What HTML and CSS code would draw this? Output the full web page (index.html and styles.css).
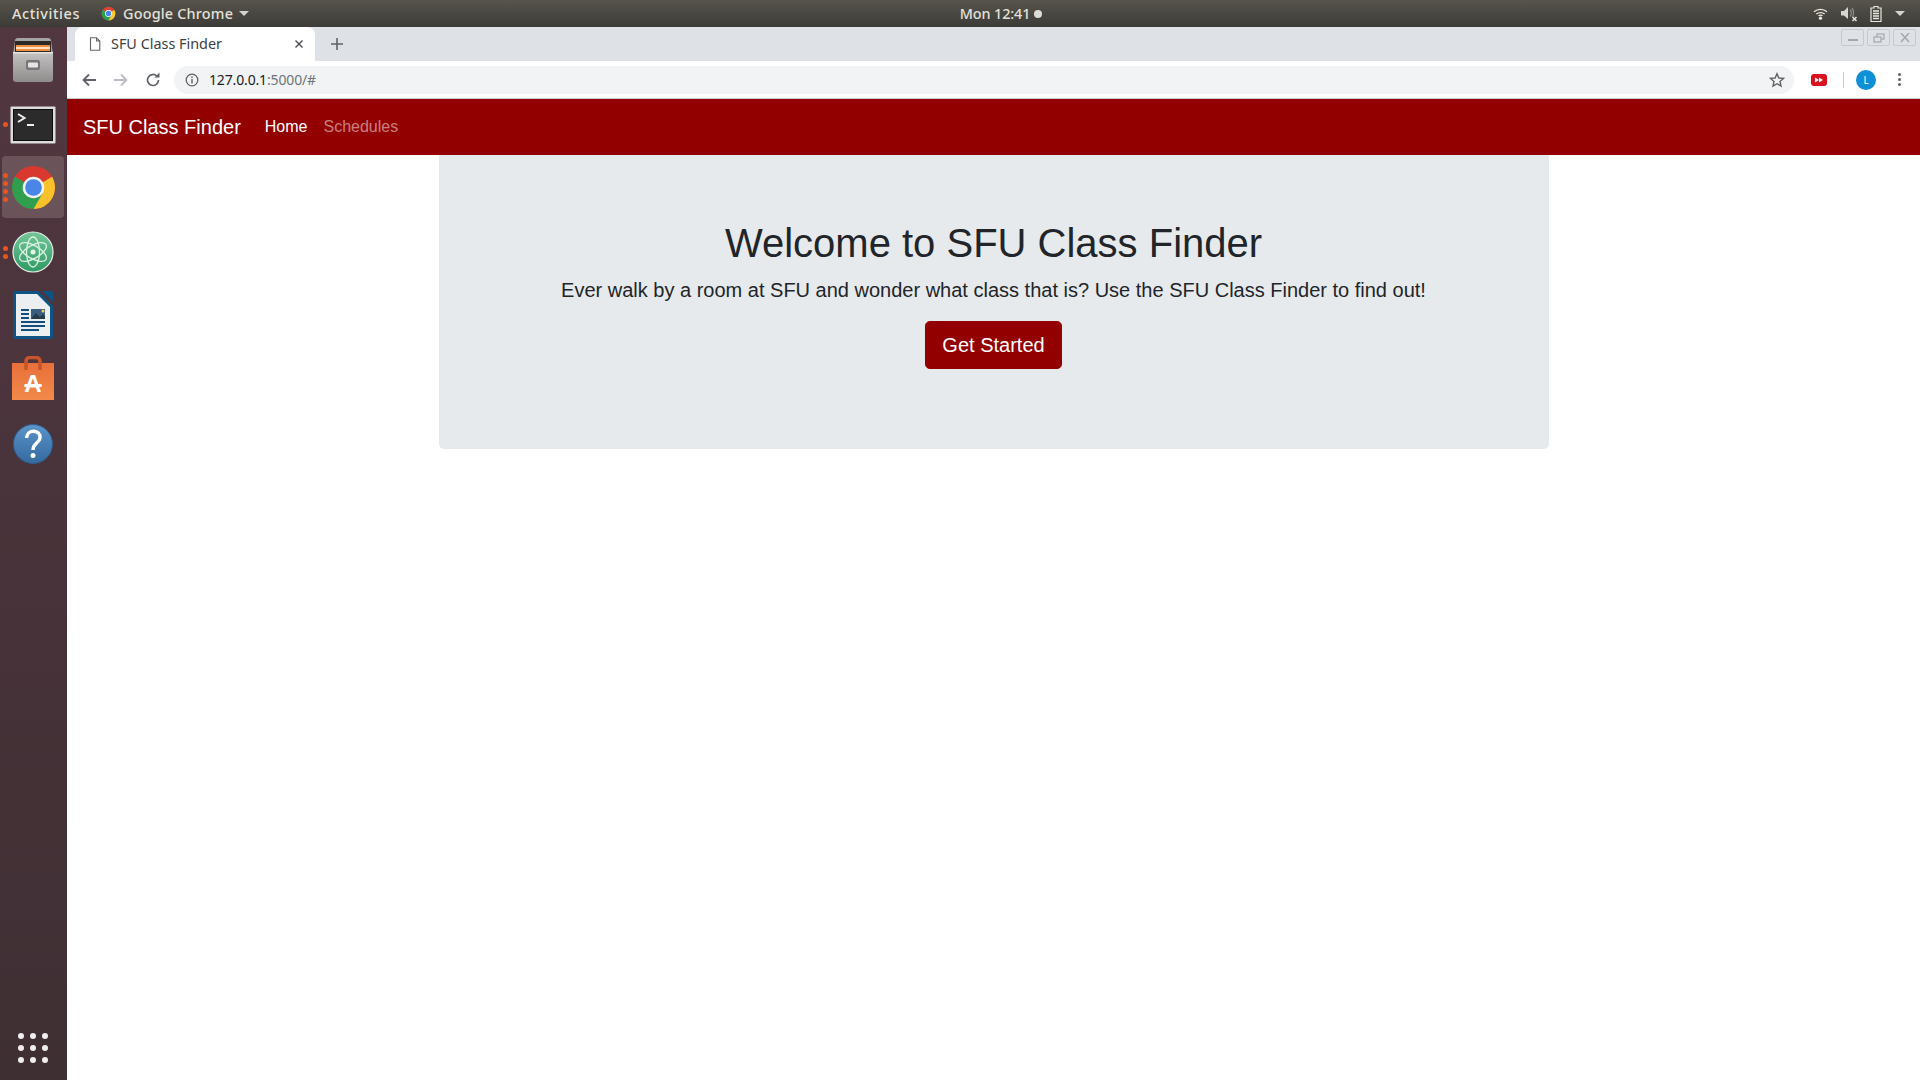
FILE: index.html
```html
<!DOCTYPE html>
<html lang="en">
<head>
<meta charset="utf-8">
<title>SFU Class Finder</title>
<link rel="stylesheet" href="styles.css">
</head>
<body>
<header class="topbar">
  <div class="top-left">
    <span class="top-text top-activities">Activities</span>
    <span class="app-menu">
      <svg class="app-chrome" viewBox="0 0 48 48"><circle cx="24" cy="24" r="22" fill="#db4437"/><path d="M24 24 43 13A22 22 0 0 1 24 46Z" fill="#fcc934"/><path d="M24 24 5 13A22 22 0 0 0 24 46L33.500 29.500Z" fill="#2f9e4f"/><circle cx="24" cy="24" r="11" fill="#fff"/><circle cx="24" cy="24" r="8.500" fill="#4285f4"/></svg>
      <span class="top-text">Google Chrome</span>
      <span class="caret"></span>
    </span>
  </div>
  <div class="top-clock"><span class="top-text clock-text">Mon 12:41</span><span class="clock-dot"></span></div>
  <div class="top-right">
    <svg class="tray-wifi" viewBox="0 0 16 14"><path d="M1 5.200C5 1.600 11 1.600 15 5.200" fill="none" stroke="#e8e6e0" stroke-width="1.500"/><path d="M3.500 7.600C6 5.600 10 5.600 12.500 7.600" fill="none" stroke="#e8e6e0" stroke-width="1.500"/><path d="M5.800 9.500C7 8.700 9 8.700 10.200 9.500" fill="none" stroke="#e8e6e0" stroke-width="1.300"/><circle cx="8" cy="12" r="1.800" fill="#e8e6e0"/></svg>
    <svg class="tray-vol" viewBox="0 0 18 16"><path d="M1 5H4L8 1V13L4 9.500H1Z" fill="#d8d6d0"/><path d="M10 3.500C11.500 5.500 11.500 8.500 10 10.500M12 2C14 4.500 14 9 12.500 11" fill="none" stroke="#8b8983" stroke-width="1.300"/><path d="M12.500 11 16.500 15M16.500 11 12.500 15" stroke="#e8e6e0" stroke-width="1.500"/></svg>
    <svg class="tray-bat" viewBox="0 0 12 16"><path d="M4 .5H8V2H11V15.500H1V2H4Z" fill="none" stroke="#e8e6e0" stroke-width="1.200"/><path d="M3 5H9M3 7.500H9M3 10H9M3 12.500H9" stroke="#e8e6e0" stroke-width="1.400"/></svg>
    <span class="caret caret-tray"></span>
  </div>
</header>
<div class="desktop">
  <nav class="dock">
    <div class="dock-apps">
      <div class="dock-item dock-files">
        <svg viewBox="0 0 44 46" class="ic-files"><defs><linearGradient id="filesg" x1="0" y1="0" x2="0" y2="1"><stop offset="0" stop-color="#c4c3c1"/><stop offset="1" stop-color="#8e8d8b"/></linearGradient></defs><path d="M4 3A3 3 0 0 1 7 1H37A3 3 0 0 1 40 3L42 18H2Z" fill="#a5a4a2"/><rect x="4" y="4" width="36" height="12" fill="#2c2a28"/><rect x="5" y="8" width="34" height="6" fill="#ef8d42"/><rect x="5" y="10" width="34" height="2" fill="#fbe3c4"/><path d="M2 15H42V42A3 3 0 0 1 39 45H5A3 3 0 0 1 2 42Z" fill="url(#filesg)"/><rect x="2" y="15" width="40" height="1.500" fill="#e6e5e3"/><rect x="15" y="23" width="14" height="10" rx="2" fill="#76757a"/><rect x="17" y="25.500" width="10" height="5" rx="1" fill="#e6e5e3"/></svg>
      </div>
      <div class="dock-item dock-term">
        <span class="pip-stack"><i class="pip"></i></span>
        <svg viewBox="0 0 46 38" class="ic-term"><rect x=".5" y=".5" width="45" height="37" rx="1" fill="#dcdcda"/><rect x="3.500" y="3.500" width="39" height="31" fill="#2b2b2b" stroke="#0c0c0c"/><path d="M8 8 14.500 12 8 16" fill="none" stroke="#eee" stroke-width="2"/><path d="M17 19H24" stroke="#eee" stroke-width="2"/></svg>
      </div>
      <div class="dock-item dock-chrome">
        <span class="pip-stack"><i class="pip"></i><i class="pip"></i><i class="pip"></i><i class="pip"></i></span>
        <svg viewBox="0 0 48 48" class="ic-chrome"><circle cx="24" cy="24" r="22" fill="#d9382e"/><path d="M24 24 43 13A22 22 0 0 1 24 46Z" fill="#f9c22b"/><path d="M24 24 5 13A22 22 0 0 0 24 46L33.500 29.500Z" fill="#2f9e4f"/><circle cx="24" cy="24" r="11" fill="#f4f4f4"/><circle cx="24" cy="24" r="8.500" fill="#4a85e8"/></svg>
      </div>
      <div class="dock-item dock-atom">
        <span class="pip-stack"><i class="pip"></i><i class="pip"></i></span>
        <svg viewBox="0 0 42 42" class="ic-atom"><defs><linearGradient id="atomg" x1="0" y1="0" x2="0" y2="1"><stop offset="0" stop-color="#74c697"/><stop offset="1" stop-color="#2e9a64"/></linearGradient></defs><circle cx="21" cy="21" r="20" fill="url(#atomg)" stroke="#e8efe9" stroke-width="1.200"/><g fill="none" stroke="#d9f2e2" stroke-width="1.300"><ellipse cx="21" cy="21" rx="15" ry="6.500" transform="rotate(30 21 21)"/><ellipse cx="21" cy="21" rx="15" ry="6.500" transform="rotate(-30 21 21)"/><ellipse cx="21" cy="21" rx="15" ry="6.500" transform="rotate(90 21 21)"/></g><circle cx="21" cy="21" r="2.500" fill="#e4f6ea"/></svg>
      </div>
      <div class="dock-item dock-writer">
        <svg viewBox="0 0 40 48" class="ic-writer"><path d="M2 0H25L40 15V46A2 2 0 0 1 38 48H2A2 2 0 0 1 0 46V2A2 2 0 0 1 2 0Z" fill="#0f5384"/><path d="M29 0H38A2 2 0 0 1 40 2V11Z" fill="#0f5384"/><path d="M3 3H24L37 16V45H3Z" fill="#eceff1"/><g stroke="#124f7c" stroke-width="1.800"><path d="M8 19H16M8 23H16M8 27H16M8 31H32M8 35H32M8 39H26"/></g><rect x="18" y="18" width="14" height="10" fill="#3a5e80"/><path d="M18 28 23 22 27 26 30 23 32 26V28Z" fill="#283a45"/><circle cx="30" cy="20" r="1.500" fill="#f0cf5a"/></svg>
      </div>
      <div class="dock-item dock-store">
        <svg viewBox="0 0 42 44" class="ic-store"><defs><linearGradient id="storeg" x1="0" y1="0" x2="0" y2="1"><stop offset="0" stop-color="#e8703a"/><stop offset="1" stop-color="#f28a4a"/></linearGradient></defs><rect x="0" y="7" width="42" height="37" fill="url(#storeg)"/><path d="M14 14V5A4 4 0 0 1 18 1.500H24A4 4 0 0 1 28 5V14" fill="none" stroke="#c9542a" stroke-width="3.500"/><text x="21" y="36" text-anchor="middle" class="store-a">A</text><rect x="12" y="28" width="18" height="3" rx="1.500" fill="#fff"/></svg>
      </div>
      <div class="dock-item dock-help">
        <svg viewBox="0 0 42 42" class="ic-help"><defs><linearGradient id="helpg" x1="0" y1="0" x2="0" y2="1"><stop offset="0" stop-color="#5b94c8"/><stop offset="1" stop-color="#336aa0"/></linearGradient></defs><circle cx="21" cy="21" r="19.500" fill="url(#helpg)" stroke="#2c5e8e"/><path d="M14.500 15C15 5.500 29 6.500 28 15 27.500 20 21 20 21 27" fill="none" stroke="#fff" stroke-width="3.400"/><circle cx="21" cy="32.500" r="2.500" fill="#fff"/></svg>
      </div>
    </div>
    <div class="grid-button">
      <i></i><i></i><i></i><i></i><i></i><i></i><i></i><i></i><i></i>
    </div>
  </nav>
  <main class="browser">
    <div class="tabstrip">
      <div class="tab">
        <svg class="tab-doc" viewBox="0 0 12 14"><path d="M1.500 .7H7.500L10.800 4V13.300H1.500Z M7.500 .7V4H10.800" fill="none" stroke="#5f6368" stroke-width="1.100"/></svg>
        <span class="tab-title">SFU Class Finder</span>
        <svg class="tab-x" viewBox="0 0 10 10"><path d="M1.500 1.500 8.500 8.500M8.500 1.500 1.500 8.500" stroke="#45484c" stroke-width="1.400"/></svg>
      </div>
      <svg class="tab-new" viewBox="0 0 12 12"><path d="M6 0V12M0 6H12" stroke="#5f6368" stroke-width="1.600"/></svg>
      <div class="win-buttons">
        <span class="win-btn"><svg viewBox="0 0 14 10"><path d="M2 7H12" stroke="#a4a8ad" stroke-width="2"/></svg></span>
        <span class="win-btn"><svg viewBox="0 0 14 10"><rect x="5" y="1" width="7" height="5" fill="none" stroke="#a4a8ad" stroke-width="1.200"/><rect x="2" y="4" width="7" height="5" fill="#dee1e6" stroke="#a4a8ad" stroke-width="1.200"/></svg></span>
        <span class="win-btn"><svg viewBox="0 0 14 10"><path d="M3 0 11 9M11 0 3 9" stroke="#a4a8ad" stroke-width="1.500"/></svg></span>
      </div>
    </div>
    <div class="toolbar">
      <svg class="tb-ic" viewBox="0 0 16 16"><path d="M15 8H2.500M8 2.500 2.500 8 8 13.500" fill="none" stroke="#5f6368" stroke-width="1.800"/></svg>
      <svg class="tb-ic" viewBox="0 0 16 16"><path d="M1 8H13.500M8 2.500 13.500 8 8 13.500" fill="none" stroke="#b9bcc0" stroke-width="1.800"/></svg>
      <svg class="tb-ic" viewBox="0 0 16 16"><path d="M13.500 8A5.500 5.500 0 1 1 11.800 4" fill="none" stroke="#5f6368" stroke-width="1.700"/><path d="M9.500 5.500H14.500V.5Z" fill="#5f6368"/></svg>
      <div class="omnibox">
        <svg class="omni-info" viewBox="0 0 14 14"><circle cx="7" cy="7" r="5.800" fill="none" stroke="#5f6368" stroke-width="1.300"/><path d="M7 6V10.500M7 3.500V5" stroke="#5f6368" stroke-width="1.400"/></svg>
        <span class="url"><span class="url-host">127.0.0.1</span>:5000/#</span>
        <svg class="omni-star" viewBox="0 0 16 16"><path d="M8 1.700 9.900 6 14.500 6.400 11 9.500 12 14 8 11.700 4 14 5 9.500 1.500 6.400 6.100 6Z" fill="none" stroke="#5f6368" stroke-width="1.400"/></svg>
      </div>
      <div class="tb-ext"><svg viewBox="0 0 16 12"><rect width="16" height="12" rx="3" fill="#d8121f"/><path d="M4 3.500 8 6 4 8.500ZM8 3.500 12 6 8 8.500Z" fill="#fff"/></svg></div>
      <span class="tb-sep"></span>
      <span class="avatar">L</span>
      <span class="tb-menu"><i></i><i></i><i></i></span>
    </div>
    <div class="page">
      <div class="navbar">
        <span class="brand">SFU Class Finder</span>
        <span class="nav-link nav-active">Home</span>
        <span class="nav-link">Schedules</span>
      </div>
      <div class="container">
        <section class="jumbotron">
          <h1 class="display">Welcome to SFU Class Finder</h1>
          <p class="lead">Ever walk by a room at SFU and wonder what class that is? Use the SFU Class Finder to find out!</p>
          <p class="cta-row"><a class="btn-start">Get Started</a></p>
        </section>
      </div>
    </div>
  </main>
</div>
</body>
</html>
```

FILE: styles.css
```css
* { box-sizing: border-box; }
html, body { margin: 0; height: 100%; overflow: hidden; }
body { display: flex; flex-direction: column; height: 1080px; background: #fff; font-family: "Liberation Sans", Arial, sans-serif; }

.topbar { flex: 0 0 27px; display: grid; grid-template-columns: 1fr auto 1fr; align-items: center; background: linear-gradient(#57544c, #3c3b37); padding: 0 12px; }
.top-left { display: flex; align-items: center; gap: 21px; }
.app-menu { display: flex; align-items: center; }
.app-chrome { width: 15px; height: 15px; margin-right: 7px; }
.top-text { font: 500 14.4px/27px "Noto Sans", sans-serif; color: #e3e1da; letter-spacing: .2px; white-space: nowrap; }
.top-activities { letter-spacing: .6px; }
.clock-text { letter-spacing: -.1px; }
.caret { width: 0; height: 0; border-left: 5px solid transparent; border-right: 5px solid transparent; border-top: 5px solid #d6d4ce; margin-left: 6px; }
.top-clock { display: flex; align-items: center; gap: 4px; margin-left: 82px; }
.clock-dot { width: 8px; height: 8px; border-radius: 50%; background: #dedcd6; }
.top-right { display: flex; align-items: center; justify-content: flex-end; padding-right: 3px; }
.tray-wifi { width: 15px; height: 13px; margin-right: 12px; }
.tray-vol { width: 18px; height: 16px; margin-right: 12px; }
.tray-bat { width: 12px; height: 16px; margin-right: 13px; }
.caret-tray { margin-left: 0; }

.desktop { flex: 1; display: flex; min-height: 0; }

.dock { flex: 0 0 67px; display: flex; flex-direction: column; justify-content: space-between; background: linear-gradient(#523740, #3e2f33); padding: 1px 1px 0 0; }
.dock-apps { display: flex; flex-direction: column; }
.dock-item { position: relative; height: 64px; display: flex; align-items: center; justify-content: center; }
.dock-term { padding-top: 2px; }
.dock-chrome { background: #6a5459; border-radius: 4px; margin: 0 2px 2px; height: 62px; }
.dock-atom { padding-bottom: 1px; }
.dock-writer { padding-bottom: 2px; }
.dock-store { padding-bottom: 4px; }
.pip-stack { position: absolute; left: 3px; top: 0; bottom: 0; display: flex; flex-direction: column; justify-content: center; gap: 3px; }
.dock-chrome .pip-stack { left: 1px; }
.pip { display: block; width: 5px; height: 5px; border-radius: 50%; background: #e95420; }
.ic-files { width: 44px; height: 46px; }
.ic-term { width: 46px; height: 38px; }
.ic-chrome { width: 47px; height: 47px; }
.ic-atom { width: 42px; height: 42px; }
.ic-writer { width: 40px; height: 48px; }
.ic-store { width: 42px; height: 44px; }
.store-a { font: 700 24px "Liberation Sans", sans-serif; fill: #fff; }
.ic-help { width: 42px; height: 42px; }

.grid-button { display: grid; grid-template-columns: repeat(3, 6px); gap: 6px; justify-content: center; padding-bottom: 17px; }
.grid-button i { width: 6px; height: 6px; border-radius: 50%; background: #f0eeee; }

.browser { flex: 1; display: flex; flex-direction: column; min-width: 0; }

.tabstrip { flex: 0 0 34px; display: flex; align-items: center; background: #dee1e6; padding-left: 8px; }
.tab { width: 240px; height: 34px; display: flex; align-items: center; background: #fff; border-radius: 8px 8px 0 0; padding: 0 11px 0 14px; }
.tab-doc { width: 12px; height: 14px; margin-right: 10px; }
.tab-title { flex: 1; font: 400 14.400px/33px "Noto Sans", sans-serif; color: #3c4043; height: 34px; white-space: nowrap; }
.tab-x { width: 10px; height: 10px; }
.tab-new { width: 12px; height: 12px; margin-left: 16px; }
.win-buttons { margin-left: auto; display: flex; gap: 3px; align-self: flex-start; padding: 2px 4px 0 0; }
.win-btn { width: 23px; height: 17px; border: 1px solid #c6c9ce; border-radius: 2px; display: flex; align-items: center; justify-content: center; }
.win-btn svg { width: 14px; height: 10px; }

.toolbar { flex: 0 0 38px; display: flex; align-items: center; background: #fff; border-bottom: 1px solid #c9cbce; padding: 0 0 0 14px; }
.tb-ic { width: 16px; height: 16px; margin-right: 16px; }
.tb-ic:nth-child(3) { margin-right: 13px; }
.omnibox { width: 1620px; height: 28px; display: flex; align-items: center; background: #f1f3f4; border-radius: 14px; padding: 0 9px 0 11px; }
.omni-info { width: 14px; height: 14px; margin-right: 10px; }
.url { flex: 1; font: 400 14px/28px "Noto Sans", sans-serif; color: #70757a; letter-spacing: -.15px; }
.url-host { color: #202124; }
.omni-star { width: 16px; height: 16px; }
.tb-ext { width: 16px; height: 12px; margin-left: 17px; display: flex; }
.tb-ext svg { width: 16px; height: 12px; }
.tb-sep { width: 1px; height: 16px; background: #c9cbce; margin-left: 16px; }
.avatar { width: 20px; height: 20px; margin-left: 12px; border-radius: 50%; background: #0f8fd6; color: #fff; font: 400 10px/20px "Noto Sans", sans-serif; text-align: center; }
.tb-menu { display: flex; flex-direction: column; gap: 2px; margin-left: 22px; }
.tb-menu i { width: 3px; height: 3px; border-radius: 50%; background: #5f6368; }

.page { flex: 1; background: #fff; }
.navbar { height: 56px; display: flex; align-items: center; background: #930000; padding: 0 16px; }
.brand { font-size: 20px; line-height: 30px; color: #fff; margin-right: 16px; white-space: nowrap; }
.nav-link { font-size: 16px; line-height: 24px; padding: 0 8px; color: rgba(255,255,255,.5); }
.nav-active { color: #fff; }

.container { width: 1140px; margin: 0 auto; padding: 0 15px; }
.jumbotron { background: #e7eaed; border-radius: 0 0 5px 5px; padding: 64px 32px; text-align: center; color: #212529; }
.display { margin: 0 0 8px; font-size: 40px; line-height: 48px; font-weight: 400; }
.lead { margin: 0 0 16px; font-size: 20px; line-height: 30px; font-weight: 300; }
.cta-row { margin: 0 0 16px; height: 48px; }
.btn-start { display: inline-block; height: 48px; padding: 8px 16px; font-size: 20px; line-height: 30px; color: #fff; background: #930000; border: 1px solid #930000; border-radius: 4.800px; }
```
